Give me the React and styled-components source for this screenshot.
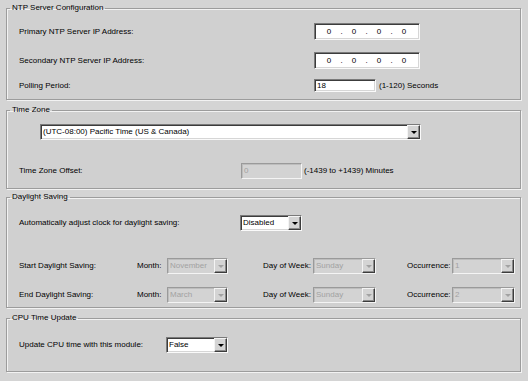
import React from "react";
import styled, { createGlobalStyle } from "styled-components";

const GlobalStyle = createGlobalStyle`
    html, body {
        margin: 0;
        padding: 0;
        background: #d4d4d4;
    }
    body {
        font-family: "Liberation Sans", Arial, sans-serif;
        font-size: 8px;
        color: #000;
    }
`;

const Page = styled.div`
    width: 528px;
    height: 381px;
    padding-top: 3px;
    box-sizing: border-box;
    background: #d4d4d4;
    overflow: hidden;
`;

const Group = styled.fieldset`
    margin: ${(p) => p.$mt || 0}px 7px 0 6px;
    padding: ${(p) => p.$pt}px 12px ${(p) => p.$pb}px 12px;
    min-width: 0;
    border: 1px solid #9c9c9c;
    box-shadow: 1px 1px 0 #f2f2f2, inset 1px 1px 0 #f2f2f2;
    background: #d0d0d0;
`;

const Legend = styled.legend`
    font-size: 8px;
    line-height: 10px;
    padding: 0 2px;
    margin-left: -9px;
    color: #000;
`;

const Row = styled.div`
    display: flex;
    align-items: center;
    height: ${(p) => p.$h || 16}px;
    margin-top: ${(p) => p.$mt || 0}px;
    white-space: nowrap;
`;

const Label = styled.span`
    width: ${(p) => p.$w}px;
    margin-left: ${(p) => p.$ml || 0}px;
    flex: none;
    line-height: 10px;
`;

const Hint = styled.span`
    margin-left: ${(p) => p.$ml || 3}px;
    line-height: 10px;
`;

const Sunken = styled.div`
    box-sizing: border-box;
    flex: none;
    width: ${(p) => p.$w}px;
    height: ${(p) => p.$h || 16}px;
    margin-left: ${(p) => p.$ml || 0}px;
    border: 1px solid;
    border-color: ${(p) =>
        p.$disabled ? "#9a9a9a #f4f4f4 #f4f4f4 #9a9a9a" : "#7a7a7a #fafafa #fafafa #7a7a7a"};
    box-shadow: ${(p) =>
        p.$disabled
            ? "inset 1px 1px 0 #bdbdbd"
            : "inset 1px 1px 0 #3c3c3c, inset -1px -1px 0 #d6d6d6"};
    background: ${(p) => (p.$disabled ? "#d3d3d3" : "#ffffff")};
    color: ${(p) => (p.$disabled ? "#a2a2a2" : "#000")};
    display: flex;
    align-items: center;
    line-height: 10px;
    overflow: hidden;
`;

const IpBox = styled(Sunken)`
    justify-content: flex-start;
    padding-left: 8px;
`;

const Octet = styled.span`
    width: 12px;
    text-align: center;
`;

const Dot = styled.span`
    width: 13px;
    text-align: center;
`;

const Value = styled.span`
    flex: 1;
    padding-left: 2px;
    overflow: hidden;
`;

const ArrowButton = styled.div`
    box-sizing: border-box;
    width: 13px;
    height: 100%;
    flex: none;
    background: #d4d4d4;
    border: 1px solid;
    border-color: #f4f4f4 #3c3c3c #3c3c3c #f4f4f4;
    box-shadow: inset -1px -1px 0 #8a8a8a;
    display: flex;
    align-items: center;
    justify-content: center;

    &::after {
        content: "";
        width: 0;
        height: 0;
        border-left: 3px solid transparent;
        border-right: 3px solid transparent;
        border-top: 3px solid ${(p) => (p.$disabled ? "#a2a2a2" : "#000")};
        margin-top: 1px;
    }
`;

function IpAddress() {
    return (
        <IpBox $w={106} $h={17}>
            <Octet>0</Octet>
            <Dot>.</Dot>
            <Octet>0</Octet>
            <Dot>.</Dot>
            <Octet>0</Octet>
            <Dot>.</Dot>
            <Octet>0</Octet>
        </IpBox>
    );
}

function Select({ value, w, ml, disabled }) {
    return (
        <Sunken $w={w} $ml={ml} $disabled={disabled}>
            <Value>{value}</Value>
            <ArrowButton $disabled={disabled} />
        </Sunken>
    );
}

function DaylightRow({ title, month, occurrence, mt }) {
    return (
        <Row $mt={mt}>
            <Label $w={118}>{title}</Label>
            <Label $w={30}>Month:</Label>
            <Select value={month} w={61} disabled />
            <Label $w={50} $ml={35}>Day of Week:</Label>
            <Select value="Sunday" w={63} disabled />
            <Label $w={45} $ml={31}>Occurrence:</Label>
            <Select value={occurrence} w={63} disabled />
        </Row>
    );
}

export default function App() {
    return (
        <Page>
            <GlobalStyle />
            <Group $pt={10} $pb={5}>
                <Legend>NTP Server Configuration</Legend>
                <Row $h={17}>
                    <Label $w={295}>Primary NTP Server IP Address:</Label>
                    <IpAddress />
                </Row>
                <Row $h={17} $mt={12}>
                    <Label $w={295}>Secondary NTP Server IP Address:</Label>
                    <IpAddress />
                </Row>
                <Row $h={17} $mt={8}>
                    <Label $w={295}>Polling Period:</Label>
                    <Sunken $w={62} $h={13}>
                        <Value>18</Value>
                    </Sunken>
                    <Hint>(1-120) Seconds</Hint>
                </Row>
            </Group>

            <Group $mt={5} $pt={9} $pb={9}>
                <Legend>Time Zone</Legend>
                <Row>
                    <Select value="(UTC-08:00) Pacific Time (US & Canada)" w={381} ml={21} />
                </Row>
                <Row $mt={23}>
                    <Label $w={222}>Time Zone Offset:</Label>
                    <Sunken $w={61} $disabled>
                        <Value>0</Value>
                    </Sunken>
                    <Hint $ml={2}>(-1439 to +1439) Minutes</Hint>
                </Row>
            </Group>

            <Group $mt={3} $pt={13} $pb={4}>
                <Legend>Daylight Saving</Legend>
                <Row>
                    <Label $w={221}>Automatically adjust clock for daylight saving:</Label>
                    <Select value="Disabled" w={62} />
                </Row>
                <DaylightRow title="Start Daylight Saving:" month="November" occurrence="1" mt={27} />
                <DaylightRow title="End Daylight Saving:" month="March" occurrence="2" mt={13} />
            </Group>

            <Group $mt={5} $pt={14} $pb={18}>
                <Legend>CPU Time Update</Legend>
                <Row>
                    <Label $w={147}>Update CPU time with this module:</Label>
                    <Select value="False" w={62} />
                </Row>
            </Group>
        </Page>
    );
}
